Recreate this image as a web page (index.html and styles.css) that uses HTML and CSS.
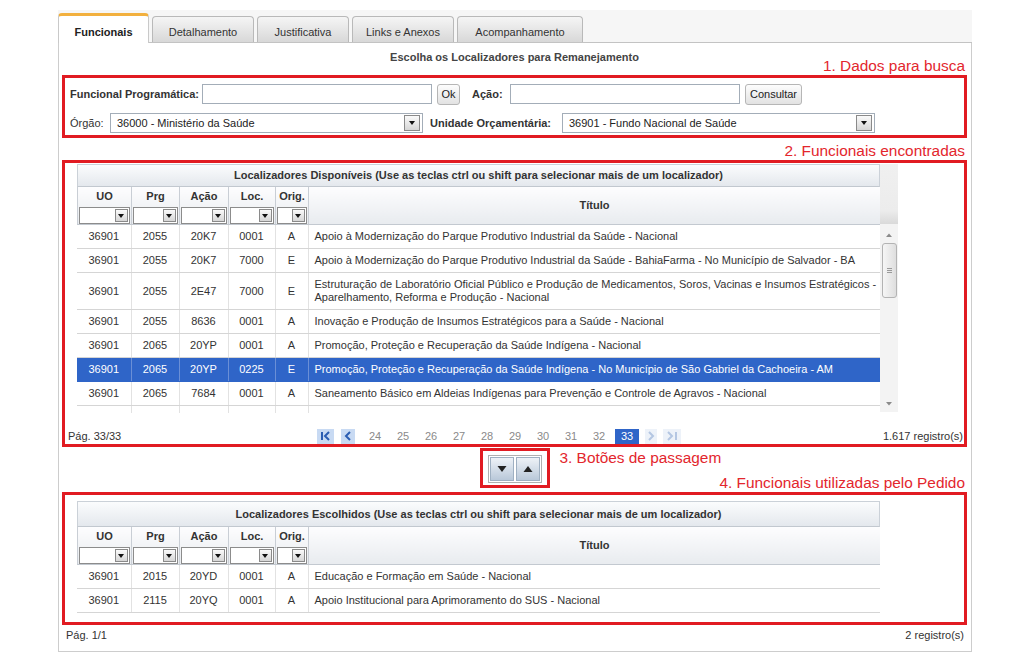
FILE: index.html
```html
<!DOCTYPE html>
<html lang="pt-BR">
<head>
<meta charset="utf-8">
<title>Funcionais</title>
<link rel="stylesheet" href="styles.css">
</head>
<body>
<div class="page">
  <div class="panel">
    <div class="tabs">
      <div class="tab tab-active w91">Funcionais</div>
      <div class="tab w102">Detalhamento</div>
      <div class="tab w92">Justificativa</div>
      <div class="tab w102">Links e Anexos</div>
      <div class="tab w126">Acompanhamento</div>
    </div>
    <div class="content">
      <div class="head-row">
        <div></div>
        <div class="page-title">Escolha os Localizadores para Remanejamento</div>
        <div class="note note-bottom">1. Dados para busca</div>
      </div>

      <div class="box box-search">
        <div class="form-row">
          <span class="lbl b lbl-fp">Funcional Programática:</span>
          <span class="txt"></span>
          <span class="btn btn-ok">Ok</span>
          <span class="lbl b lbl-acao">Ação:</span>
          <span class="txt"></span>
          <span class="btn btn-consultar">Consultar</span>
        </div>
        <div class="form-row">
          <span class="lbl lbl-orgao">Órgão:</span>
          <span class="sel"><span class="sel-text">36000 - Ministério da Saúde</span><span class="dd dd-big"></span></span>
          <span class="lbl b lbl-uo">Unidade Orçamentária:</span>
          <span class="sel"><span class="sel-text">36901 - Fundo Nacional de Saúde</span><span class="dd dd-big"></span></span>
        </div>
      </div>

      <div class="note note-line">2. Funcionais encontradas</div>

      <div class="box box-grid">
        <div class="grid-wrap">
          <div class="grid">
            <div class="grid-caption">Localizadores Disponíveis (Use as teclas ctrl ou shift para selecionar mais de um localizador)</div>
            <table class="gt gh">
              <colgroup><col class="c1"><col class="c2"><col class="c3"><col class="c4"><col class="c5"><col></colgroup>
              <tr>
                <th>UO<span class="flt"><span class="dd"></span></span></th>
                <th>Prg<span class="flt"><span class="dd"></span></span></th>
                <th>Ação<span class="flt"><span class="dd"></span></span></th>
                <th>Loc.<span class="flt"><span class="dd"></span></span></th>
                <th>Orig.<span class="flt"><span class="dd"></span></span></th>
                <th class="th-title">Título</th>
              </tr>
            </table>
            <div class="viewport">
              <table class="gt gb">
                <colgroup><col class="c1"><col class="c2"><col class="c3"><col class="c4"><col class="c5"><col></colgroup>
                <tr><td>36901</td><td>2055</td><td>20K7</td><td>0001</td><td>A</td><td class="t">Apoio à Modernização do Parque Produtivo Industrial da Saúde - Nacional</td></tr>
                <tr><td>36901</td><td>2055</td><td>20K7</td><td>7000</td><td>E</td><td class="t">Apoio à Modernização do Parque Produtivo Industrial da Saúde - BahiaFarma - No Município de Salvador - BA</td></tr>
                <tr><td>36901</td><td>2055</td><td>2E47</td><td>7000</td><td>E</td><td class="t">Estruturação de Laboratório Oficial Público e Produção de Medicamentos, Soros, Vacinas e Insumos Estratégicos -<br>Aparelhamento, Reforma e Produção - Nacional</td></tr>
                <tr><td>36901</td><td>2055</td><td>8636</td><td>0001</td><td>A</td><td class="t">Inovação e Produção de Insumos Estratégicos para a Saúde - Nacional</td></tr>
                <tr><td>36901</td><td>2065</td><td>20YP</td><td>0001</td><td>A</td><td class="t">Promoção, Proteção e Recuperação da Saúde Indígena - Nacional</td></tr>
                <tr class="sel-row"><td>36901</td><td>2065</td><td>20YP</td><td>0225</td><td>E</td><td class="t">Promoção, Proteção e Recuperação da Saúde Indígena - No Município de São Gabriel da Cachoeira - AM</td></tr>
                <tr><td>36901</td><td>2065</td><td>7684</td><td>0001</td><td>A</td><td class="t">Saneamento Básico em Aldeias Indígenas para Prevenção e Controle de Agravos - Nacional</td></tr>
                <tr><td>&nbsp;</td><td>&nbsp;</td><td>&nbsp;</td><td>&nbsp;</td><td>&nbsp;</td><td class="t">&nbsp;</td></tr>
              </table>
            </div>
          </div>
          <div class="vscroll">
            <div class="vs-head"></div>
            <div class="vs-track">
              <svg class="vs-arrow" width="18" height="10" viewBox="0 0 18 10"><path d="M6 7 L9 3.5 L12 7 Z" fill="#8a8a8a"/></svg>
              <div class="vs-thumb"><span class="grip"></span></div>
              <div class="vs-fill"></div>
              <svg class="vs-arrow" width="18" height="10" viewBox="0 0 18 10"><path d="M6 3 L9 6.5 L12 3 Z" fill="#8a8a8a"/></svg>
            </div>
          </div>
        </div>
        <div class="pager">
          <span class="pg-info">Pág. 33/33</span>
          <div class="pg-nav">
            <span class="pg-ico pg-on"><svg width="17" height="14" viewBox="0 0 17 14"><path d="M5 3v8M12 3 L8 7 L12 11" stroke="#2b5db2" stroke-width="2" fill="none"/></svg></span>
            <span class="pg-ico pg-on pg-prev"><svg width="14" height="14" viewBox="0 0 14 14"><path d="M9 3 L5 7 L9 11" stroke="#2b5db2" stroke-width="2" fill="none"/></svg></span>
            <span class="pg-num">24</span>
            <span class="pg-num">25</span>
            <span class="pg-num">26</span>
            <span class="pg-num">27</span>
            <span class="pg-num">28</span>
            <span class="pg-num">29</span>
            <span class="pg-num">30</span>
            <span class="pg-num">31</span>
            <span class="pg-num">32</span>
            <span class="pg-num"><span class="pg-cur">33</span></span>
            <span class="pg-ico pg-off pg-next"><svg width="12" height="14" viewBox="0 0 12 14"><path d="M4 3 L8 7 L4 11" stroke="#b4c6e2" stroke-width="2" fill="none"/></svg></span>
            <span class="pg-ico pg-off"><svg width="18" height="14" viewBox="0 0 18 14"><path d="M5 3 L9 7 L5 11M13 3v8" stroke="#b4c6e2" stroke-width="2" fill="none"/></svg></span>
          </div>
          <span class="pg-count">1.617 registro(s)</span>
        </div>
      </div>

      <div class="transfer">
        <div></div>
        <div class="box box-btns">
          <div class="btn-group">
            <span class="mv-btn"><svg width="10" height="8" viewBox="0 0 10 8"><path d="M0.5 1 L9.5 1 L5 7 Z" fill="#222"/></svg></span>
            <span class="mv-btn"><svg width="10" height="8" viewBox="0 0 10 8"><path d="M0.5 7 L9.5 7 L5 1 Z" fill="#222"/></svg></span>
          </div>
        </div>
        <div class="transfer-notes">
          <div class="note note-left">3. Botões de passagem</div>
          <div class="note note-right">4. Funcionais utilizadas pelo Pedido</div>
        </div>
      </div>

      <div class="box box-grid2">
        <div class="grid">
          <div class="grid-caption grid-caption2">Localizadores Escolhidos (Use as teclas ctrl ou shift para selecionar mais de um localizador)</div>
          <table class="gt gh gh2">
            <colgroup><col class="c1"><col class="c2"><col class="c3"><col class="c4"><col class="c5"><col></colgroup>
            <tr>
              <th>UO<span class="flt"><span class="dd"></span></span></th>
              <th>Prg<span class="flt"><span class="dd"></span></span></th>
              <th>Ação<span class="flt"><span class="dd"></span></span></th>
              <th>Loc.<span class="flt"><span class="dd"></span></span></th>
              <th>Orig.<span class="flt"><span class="dd"></span></span></th>
              <th class="th-title">Título</th>
            </tr>
          </table>
          <table class="gt gb">
            <colgroup><col class="c1"><col class="c2"><col class="c3"><col class="c4"><col class="c5"><col></colgroup>
            <tr><td>36901</td><td>2015</td><td>20YD</td><td>0001</td><td>A</td><td class="t">Educação e Formação em Saúde - Nacional</td></tr>
            <tr><td>36901</td><td>2115</td><td>20YQ</td><td>0001</td><td>A</td><td class="t">Apoio Institucional para Aprimoramento do SUS - Nacional</td></tr>
          </table>
        </div>
      </div>

      <div class="footer-row">
        <span>Pág. 1/1</span>
        <span>2 registro(s)</span>
      </div>
    </div>
  </div>
</div>
</body>
</html>
```
FILE: styles.css
```css
* { box-sizing: border-box; }
html, body { margin: 0; padding: 0; background: #fff; }
body {
  font-family: "Liberation Sans", Arial, sans-serif;
  font-size: 11px;
  color: #333;
}
.page {
  width: 1024px;
  height: 668px;
  overflow: hidden;
  padding-top: 10px;
}
.panel {
  margin-left: 58px;
  width: 914px;
}

/* Tabs */
.tabs {
  display: flex;
  align-items: flex-end;
  gap: 3px;
  height: 33px;
  background: #f6f6f6;
  border-bottom: 1px solid #c3c3c3;
}
.tab {
  height: 26px;
  padding-top: 9px;
  text-align: center;
  line-height: 13px;
  color: #333;
  background: linear-gradient(#f5f5f5, #d8d8d8);
  border: 1px solid #b9b9b9;
  border-bottom: none;
  border-radius: 4px 4px 0 0;
}
.tab-active {
  height: 30px;
  margin-bottom: -1px;
  padding-top: 10px;
  font-weight: bold;
  color: #222;
  background: #fff;
  border-color: #c9c9c9;
  border-top: 3px solid #f2b03e;
}
.w91 { width: 91px; }
.w92 { width: 92px; }
.w102 { width: 102px; }
.w126 { width: 126px; }

/* Content */
.content {
  border: 1px solid #cdcdcd;
  border-top: none;
  padding: 0 4px 8px 3px;
}
.head-row {
  display: grid;
  grid-template-columns: 1fr auto 1fr;
  height: 32px;
}
.page-title {
  padding-top: 8px;
  line-height: 13px;
  font-weight: bold;
  color: #444;
  font-size: 11px;
}
.note {
  font-size: 15.4px;
  line-height: 18px;
  color: #e3262d;
  white-space: nowrap;
}
.note-bottom {
  align-self: end;
  text-align: right;
  padding-right: 2px;
}
.note-line {
  margin-top: 4px;
  text-align: right;
  padding-right: 2px;
}

.box { border: 3px solid #e11b22; }

/* Search box */
.box-search {
  height: 63px;
  padding: 6px 0 0 5px;
  display: flex;
  flex-direction: column;
  gap: 9px;
}
.form-row {
  display: flex;
  align-items: center;
  height: 20px;
}
.lbl { color: #333; white-space: nowrap; }
.b { font-weight: bold; }
.lbl-fp { width: 132px; }
.lbl-acao { width: 38px; margin-left: 12px; }
.lbl-orgao { width: 40px; }
.lbl-uo { width: 132px; margin-left: 7px; }
.txt {
  display: block;
  width: 230px;
  height: 20px;
  border: 1px solid #a3adb8;
  background: #fff;
}
.btn {
  display: block;
  height: 21px;
  line-height: 19px;
  text-align: center;
  border: 1px solid #b6b6b6;
  border-radius: 3px;
  background: linear-gradient(#fdfdfd, #e2e2e2);
  color: #222;
}
.btn-ok { width: 23px; margin-left: 5px; }
.btn-consultar { width: 57px; margin-left: 5px; }
.sel {
  display: flex;
  align-items: center;
  width: 313px;
  height: 20px;
  border: 1px solid #a3adb8;
  background: #fff;
  padding: 0 2px 0 6px;
}
.sel-text { flex: 1; color: #222; }
.dd {
  display: block;
  width: 13px;
  height: 13px;
  border: 1px solid #8a8a8a;
  background: linear-gradient(#fafafa, #d6d6d6);
  position: relative;
}
.dd::after {
  content: "";
  position: absolute;
  left: 2px;
  top: 4px;
  border-left: 3.5px solid transparent;
  border-right: 3.5px solid transparent;
  border-top: 4px solid #111;
}
.dd-big { width: 16px; height: 16px; }
.dd-big::after { left: 3.5px; top: 5px; }

/* Grid box */
.box-grid {
  padding: 1px 0 0 12px;
}
.grid-wrap { display: flex; }
.grid { width: 803px; }
.grid-caption {
  height: 23px;
  line-height: 21px;
  text-align: center;
  font-weight: bold;
  color: #333;
  background: linear-gradient(#fbfcfd, #e4e8ed);
  border: 1px solid #cbd1d8;
  border-bottom-color: #c2c8cf;
}
.grid-caption2 { height: 26px; line-height: 24px; }
.gt {
  width: 803px;
  border-collapse: collapse;
  table-layout: fixed;
}
.c1 { width: 54px; }
.c2 { width: 48px; }
.c3 { width: 49px; }
.c4 { width: 47px; }
.c5 { width: 33px; }
.gh th {
  height: 37px;
  padding: 3px 0 0 0;
  vertical-align: top;
  font-weight: bold;
  color: #333;
  line-height: 13px;
  background: linear-gradient(#fdfdfe, #e8ebef);
  border-right: 1px solid #c9ced5;
  border-bottom: 1px solid #c3c9d0;
}
.gh th:first-child { border-left: 1px solid #c9ced5; }
.gh th.th-title { vertical-align: middle; padding-top: 0; border-right: none; }
.gh2 th { height: 36px; }
.flt {
  display: flex;
  justify-content: flex-end;
  align-items: center;
  height: 17px;
  margin: 4px 1px 0 1px;
  padding-right: 1px;
  border: 1px solid #8c8c8c;
  background: #fff;
}
.viewport {
  height: 188px;
  overflow: hidden;
}
.gb td {
  padding: 5px 3px;
  line-height: 13px;
  text-align: center;
  color: #333;
  border-bottom: 1px solid #d5d5d5;
  border-right: 1px solid #e2e2e2;
  white-space: nowrap;
  overflow: hidden;
}
.gb td.t {
  text-align: left;
  padding-left: 6px;
  border-right: none;
}
.gb tr.sel-row td {
  background: #2f65c8;
  color: #fff;
  border-right-color: #6a8fd6;
  border-bottom-color: #2f65c8;
}

/* Scrollbar */
.vscroll {
  width: 18px;
  display: flex;
  flex-direction: column;
}
.vs-head {
  height: 60px;
  background: linear-gradient(#f0f0f0 0, #ececec 78%, #d9d9d9 100%);
}
.vs-track {
  height: 188px;
  background: #f3f3f3;
  display: flex;
  flex-direction: column;
  align-items: center;
  padding: 6px 0 3px 0;
}
.vs-arrow { display: block; }
.vs-thumb {
  width: 15px;
  height: 55px;
  margin-top: 3px;
  border: 1px solid #b3b3b3;
  border-radius: 3px;
  background: linear-gradient(90deg, #f6f6f6, #dedede);
  display: flex;
  align-items: center;
  justify-content: center;
}
.grip {
  width: 5px;
  height: 5px;
  border-top: 1px solid #9a9a9a;
  border-bottom: 1px solid #9a9a9a;
  position: relative;
}
.grip::after {
  content: "";
  position: absolute;
  left: 0;
  right: 0;
  top: 1px;
  border-top: 1px solid #9a9a9a;
}
.vs-fill { flex: 1; }

/* Pager */
.pager {
  display: grid;
  grid-template-columns: 249px auto 1fr;
  align-items: center;
  height: 16px;
  margin-top: 15px;
  margin-left: -12px;
  padding: 0 1px 0 3px;
  line-height: 16px;
}
.pg-info { color: #333; }
.pg-count { text-align: right; color: #333; }
.pg-nav { display: flex; align-items: center; }
.pg-ico {
  display: flex;
  align-items: center;
  justify-content: center;
  height: 15px;
}
.pg-on { background: #c8daf3; }
.pg-off { background: #edf2f9; }
.pg-prev { margin-left: 7px; margin-right: 6px; }
.pg-next { margin-left: 4px; margin-right: 6px; }
.pg-num {
  width: 28px;
  text-align: center;
  color: #8a8a8a;
}
.pg-cur {
  display: inline-block;
  background: #2f65c8;
  color: #fff;
  padding: 0 6px;
  line-height: 15px;
}

/* Transfer */
.transfer {
  display: grid;
  grid-template-columns: 1fr auto 1fr;
  height: 45px;
}
.box-btns {
  margin-top: 1px;
  height: 40px;
  padding: 4px 5px;
}
.btn-group {
  display: flex;
  gap: 2px;
  padding: 1px;
  border: 1px solid #b0b0b0;
  background: #fff;
}
.mv-btn {
  width: 24px;
  height: 24px;
  display: flex;
  align-items: center;
  justify-content: center;
  border: 1px solid #9fb0c2;
  background: linear-gradient(#eef2f7, #b9c8d9);
}
.transfer-notes {
  display: flex;
  flex-direction: column;
  justify-content: space-between;
}
.note-left { padding-left: 10px; padding-top: 2px; }
.note-right { text-align: right; padding-right: 2px; }

/* Second grid */
.box-grid2 {
  height: 133px;
  padding: 6px 0 0 12px;
}

.footer-row {
  display: flex;
  justify-content: space-between;
  margin-top: 2px;
  line-height: 16px;
  padding: 0 3px 0 4px;
  color: #333;
}
```
